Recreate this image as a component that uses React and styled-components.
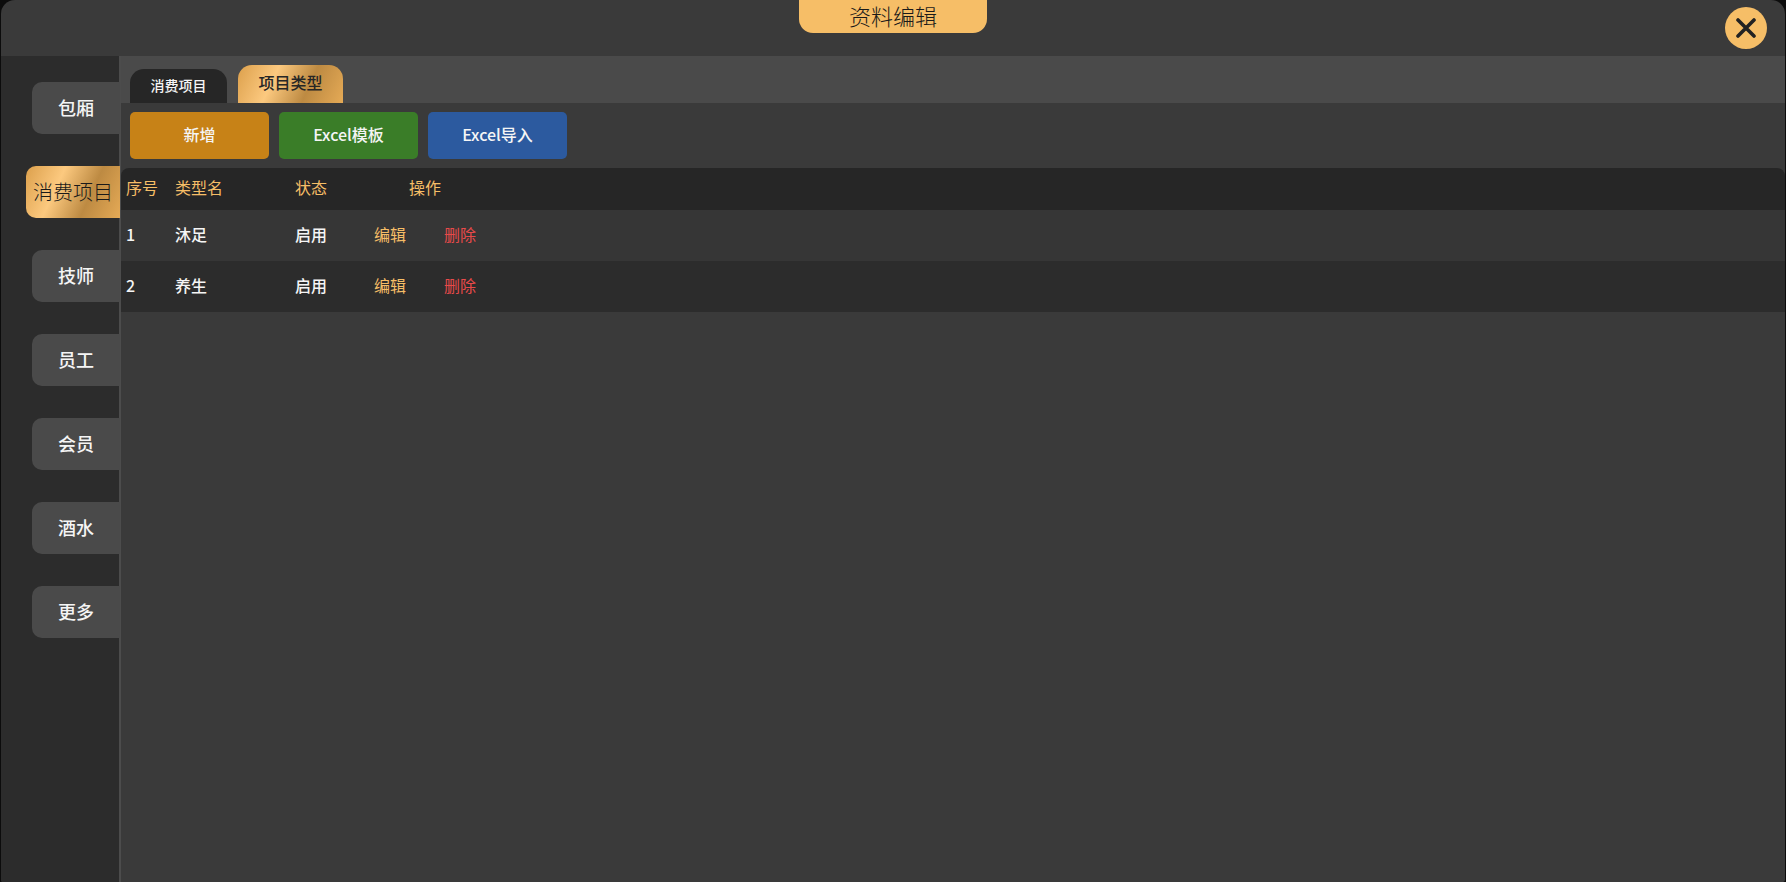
import React, { useState } from 'react';
import styled, { createGlobalStyle } from 'styled-components';

const GlobalStyle = createGlobalStyle`
  * {
    box-sizing: border-box;
  }
  body {
    margin: 0;
    background: #0c0c0c;
    color: #f5f5f5;
    font-family: 'Noto Sans CJK SC', sans-serif;
    font-size: 16px;
  }
  button {
    padding: 0 0 2px;
    border: none;
    color: inherit;
    font-family: inherit;
    cursor: pointer;
  }
`;

const gold = 'linear-gradient(115deg, #dca04c 0%, #fcc97f 34%, #bd8a42 66%, #e5aa56 100%)';

const Dialog = styled.div`
  display: flex;
  flex-direction: column;
  min-height: 100vh;
  margin: 0 1px;
  border-radius: 14px 14px 2px 2px;
  background: #3a3a3a;
  overflow: hidden;
`;

const Header = styled.header`
  display: grid;
  grid-template-columns: 1fr auto 1fr;
  height: 56px;
`;

const Title = styled.h1`
  grid-column: 2;
  width: 188px;
  height: 33px;
  margin: 0;
  border-radius: 0 0 14px 14px;
  background: #f6be67;
  color: #1a1a1a;
  font-size: 22px;
  font-weight: 300;
  line-height: 30px;
  text-align: center;
`;

const CloseButton = styled.button`
  display: flex;
  align-items: center;
  justify-content: center;
  justify-self: end;
  align-self: center;
  width: 42px;
  height: 42px;
  margin-right: 18px;
  padding: 0;
  border-radius: 50%;
  background: #f6be67;
`;

const Body = styled.div`
  display: flex;
  flex: 1;
`;

const Sidebar = styled.nav`
  display: flex;
  flex-direction: column;
  align-items: flex-end;
  gap: 32px;
  width: 120px;
  padding-top: 26px;
  border-right: 2px solid #4c4c4c;
  background: #2c2c2c;
`;

const SideItem = styled.button`
  width: ${({ $active }) => ($active ? '94px' : '88px')};
  height: 52px;
  margin-right: -1px;
  border-radius: 10px 0 0 10px;
  background: ${({ $active }) => ($active ? gold : '#4a4a4a')};
  color: ${({ $active }) => ($active ? '#1a1a1a' : '#f5f5f5')};
  font-size: ${({ $active }) => ($active ? '20px' : '18px')};
  font-weight: ${({ $active }) => ($active ? 300 : 500)};
`;

const Content = styled.main`
  flex: 1;
  min-width: 0;
`;

const TabBar = styled.div`
  display: flex;
  align-items: flex-end;
  gap: 11px;
  height: 47px;
  padding-left: 9px;
  background: #4a4a4a;
`;

const Tab = styled.button`
  width: ${({ $active }) => ($active ? '105px' : '97px')};
  height: ${({ $active }) => ($active ? '38px' : '34px')};
  padding-bottom: ${({ $active }) => ($active ? '4px' : '2px')};
  border-radius: 14px 14px 0 0;
  background: ${({ $active }) => ($active ? gold : '#262626')};
  color: ${({ $active }) => ($active ? '#262626' : '#f5f5f5')};
  font-size: ${({ $active }) => ($active ? '16px' : '14px')};
  font-weight: 500;
`;

const Toolbar = styled.div`
  display: flex;
  gap: 10px;
  padding: 9px;
`;

const ToolButton = styled.button`
  width: 139px;
  height: 47px;
  padding-bottom: 4px;
  border-radius: 5px;
  background: ${({ $color }) => $color};
  font-size: 16px;
  font-weight: 500;
`;

const Table = styled.table`
  width: 100%;
  border-collapse: collapse;
  table-layout: fixed;
  border-radius: 8px 8px 0 0;
  overflow: hidden;

  th,
  td {
    padding: 0 5px 4px;
    text-align: left;
    white-space: nowrap;
  }
  thead tr {
    height: 42px;
    background: #262626;
    color: #f6be67;
  }
  th {
    font-weight: 400;
  }
  tbody tr {
    height: 51px;
    background: #363636;
    font-weight: 500;
  }
  tbody tr:nth-child(even) {
    background: #2c2c2c;
  }
`;

const Col = styled.col`
  width: ${({ $width }) => $width};
`;

const HeadAction = styled.th`
  && {
    text-align: center;
  }
`;

const Actions = styled.div`
  display: flex;
  justify-content: center;
  gap: 38px;
`;

const TextButton = styled.button`
  padding: 0;
  background: none;
  color: ${({ $danger }) => ($danger ? '#e84a4a' : '#f6be67')};
  font-size: 16px;
`;

const menus = ['包厢', '消费项目', '技师', '员工', '会员', '酒水', '更多'];
const tabs = ['消费项目', '项目类型'];
const tools = [
  { label: '新增', color: '#c78217' },
  { label: 'Excel模板', color: '#3a7d28' },
  { label: 'Excel导入', color: '#2c5a9f' },
];
const rows = [
  { id: 1, name: '沐足', status: '启用' },
  { id: 2, name: '养生', status: '启用' },
];

const App = () => {
  const [menu, setMenu] = useState('消费项目');
  const [tab, setTab] = useState('项目类型');

  return (
    <>
      <GlobalStyle />
      <Dialog role="dialog" aria-labelledby="dialog-title">
        <Header>
          <Title id="dialog-title">资料编辑</Title>
          <CloseButton type="button" aria-label="关闭">
            <svg width="20" height="20" viewBox="0 0 20 20" stroke="#222" strokeWidth="3.6" strokeLinecap="round">
              <path d="M2 2l16 16M18 2L2 18" />
            </svg>
          </CloseButton>
        </Header>
        <Body>
          <Sidebar>
            {menus.map((item) => (
              <SideItem key={item} type="button" $active={item === menu} onClick={() => setMenu(item)}>
                {item}
              </SideItem>
            ))}
          </Sidebar>
          <Content>
            <TabBar role="tablist">
              {tabs.map((item) => (
                <Tab
                  key={item}
                  type="button"
                  role="tab"
                  aria-selected={item === tab}
                  $active={item === tab}
                  onClick={() => setTab(item)}
                >
                  {item}
                </Tab>
              ))}
            </TabBar>
            <Toolbar>
              {tools.map((tool) => (
                <ToolButton key={tool.label} type="button" $color={tool.color}>
                  {tool.label}
                </ToolButton>
              ))}
            </Toolbar>
            <Table>
              <colgroup>
                <Col $width="49px" />
                <Col $width="120px" />
                <Col $width="70px" />
                <Col $width="130px" />
                <Col $width="auto" />
              </colgroup>
              <thead>
                <tr>
                  <th>序号</th>
                  <th>类型名</th>
                  <th>状态</th>
                  <HeadAction>操作</HeadAction>
                  <td />
                </tr>
              </thead>
              <tbody>
                {rows.map((row) => (
                  <tr key={row.id}>
                    <td>{row.id}</td>
                    <td>{row.name}</td>
                    <td>{row.status}</td>
                    <td>
                      <Actions>
                        <TextButton type="button">编辑</TextButton>
                        <TextButton type="button" $danger>
                          删除
                        </TextButton>
                      </Actions>
                    </td>
                    <td />
                  </tr>
                ))}
              </tbody>
            </Table>
          </Content>
        </Body>
      </Dialog>
    </>
  );
};

export default App;
